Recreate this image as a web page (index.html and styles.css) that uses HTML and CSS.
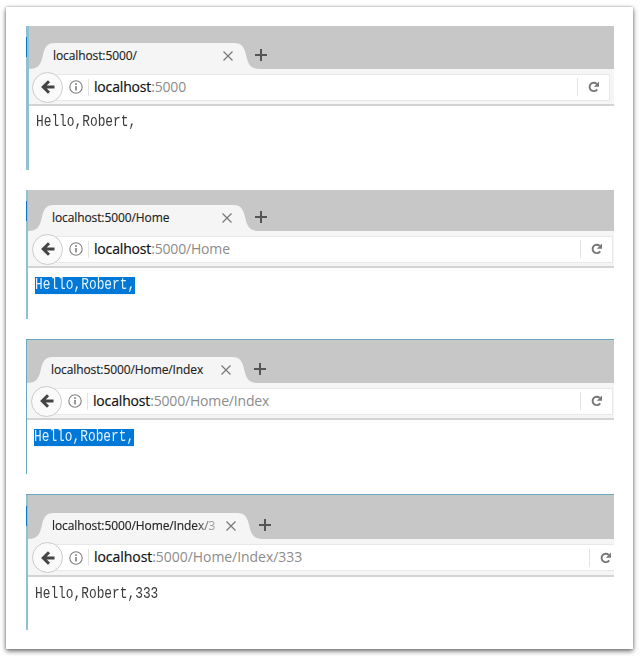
FILE: index.html
```html
<!DOCTYPE html>
<html lang="en">
<head>
<meta charset="utf-8">
<title>localhost:5000</title>
<link rel="stylesheet" href="styles.css">
</head>
<body>
<svg width="0" height="0" class="defs">
  <symbol id="tab-left" viewBox="0 0 26 27"><path d="M0 27V26C9 26 11.5 22 13.5 14C15.500 4 18 0 26 0V27Z" fill="#f5f5f5"/></symbol>
  <symbol id="tab-right" viewBox="0 0 26 27"><path d="M26 27V26C17 26 14.500 22 12.500 14C10.500 4 8 0 0 0V27Z" fill="#f5f5f5"/></symbol>
  <symbol id="close" viewBox="0 0 10 10"><path d="M.5 .5L9.5 9.5M9.5 .5L.5 9.5" stroke="#777" stroke-width="1.2"/></symbol>
  <symbol id="plus" viewBox="0 0 12 12"><path d="M6 0V12M0 6H12" stroke="#555" stroke-width="2"/></symbol>
  <symbol id="back" viewBox="0 0 14 14"><path d="M8 1.2L2.2 7L8 12.8M2.5 7H13.5" fill="none" stroke="#444" stroke-width="3"/></symbol>
  <symbol id="info" viewBox="0 0 14 14"><circle cx="7" cy="7" r="6.2" fill="none" stroke="#808080" stroke-width="1.1"/><path d="M7 3.3V4.900M7 6V10.600" stroke="#777" stroke-width="1.5"/></symbol>
  <symbol id="reload" viewBox="0 0 12 12"><path d="M9.2 8.4A4.2 4.2 0 1 1 8.7 2.9" fill="none" stroke="#777" stroke-width="1.9"/><path d="M11 .4V5.7H5.8Z" fill="#777"/></symbol>
</svg>
<main class="sheet">
  <section class="window first">
    <div class="strip"></div>
    <div class="frame">
      <div class="tabs">
        <svg class="curve"><use href="#tab-left"/></svg>
        <div class="tab"><span class="title">localhost:5000/</span><svg class="close"><use href="#close"/></svg></div>
        <svg class="curve"><use href="#tab-right"/></svg>
        <svg class="plus"><use href="#plus"/></svg>
      </div>
      <div class="toolbar">
        <div class="back"><svg><use href="#back"/></svg></div>
        <div class="field"><svg class="info"><use href="#info"/></svg><div class="url"><b>localhost</b>:5000</div><div class="reload"><svg><use href="#reload"/></svg></div></div>
      </div>
      <div class="page"><span class="output">Hello,Robert,</span></div>
    </div>
  </section>
  <section class="window second">
    <div class="strip"></div>
    <div class="frame">
      <div class="tabs">
        <svg class="curve"><use href="#tab-left"/></svg>
        <div class="tab"><span class="title">localhost:5000/Home</span><svg class="close"><use href="#close"/></svg></div>
        <svg class="curve"><use href="#tab-right"/></svg>
        <svg class="plus"><use href="#plus"/></svg>
      </div>
      <div class="toolbar">
        <div class="back"><svg><use href="#back"/></svg></div>
        <div class="field"><svg class="info"><use href="#info"/></svg><div class="url"><b>localhost</b>:5000/Home</div><div class="reload"><svg><use href="#reload"/></svg></div></div>
      </div>
      <div class="page"><span class="output selected">Hello,Robert,</span></div>
    </div>
  </section>
  <section class="window third">
    <div class="strip"></div>
    <div class="frame">
      <div class="tabs">
        <svg class="curve"><use href="#tab-left"/></svg>
        <div class="tab"><span class="title">localhost:5000/Home/Index</span><svg class="close"><use href="#close"/></svg></div>
        <svg class="curve"><use href="#tab-right"/></svg>
        <svg class="plus"><use href="#plus"/></svg>
      </div>
      <div class="toolbar">
        <div class="back"><svg><use href="#back"/></svg></div>
        <div class="field"><svg class="info"><use href="#info"/></svg><div class="url"><b>localhost</b>:5000/Home/Index</div><div class="reload"><svg><use href="#reload"/></svg></div></div>
      </div>
      <div class="page"><span class="output selected">Hello,Robert,</span></div>
    </div>
  </section>
  <section class="window fourth">
    <div class="strip"></div>
    <div class="frame">
      <div class="tabs">
        <svg class="curve"><use href="#tab-left"/></svg>
        <div class="tab"><span class="title fade">localhost:5000/Home/Index/3</span><svg class="close"><use href="#close"/></svg></div>
        <svg class="curve"><use href="#tab-right"/></svg>
        <svg class="plus"><use href="#plus"/></svg>
      </div>
      <div class="toolbar">
        <div class="back"><svg><use href="#back"/></svg></div>
        <div class="field"><svg class="info"><use href="#info"/></svg><div class="url"><b>localhost</b>:5000/Home/Index/333</div><div class="reload"><svg><use href="#reload"/></svg></div></div>
      </div>
      <div class="page"><span class="output">Hello,Robert,333</span></div>
    </div>
  </section>
</main>
</body>
</html>
```
FILE: styles.css
```css
* { box-sizing: border-box; }
body { margin: 0; height: 656px; padding: 7px 7px 7px 6px; overflow: hidden; background: #fff; font-family: "Open Sans", "Noto Sans", sans-serif; }
svg { display: block; flex: none; }
.defs { position: absolute; }
.sheet { height: 642px; width: 627px; padding: 19px 19px 0 20px; background: #fff; box-shadow: 0 2px 5px #666, 0 0 2px #bbb; }

.window { display: flex; width: 588px; overflow: hidden; }
.frame { flex: 1; min-width: 0; display: flex; flex-direction: column; }
.strip { flex: none; width: 2px; background: linear-gradient(#0877c6, #0877c6) 0 11px / 1px 20px no-repeat #8fc1d2; }

.tabs { display: flex; align-items: flex-end; background: #c7c7c7; }
.curve { width: 26px; height: 27px; margin-bottom: -1px; }
.tab { display: flex; align-items: center; width: 179px; height: 27px; margin-bottom: -1px; background: #f5f5f5; }
.title { flex: 1; margin-left: -2px; padding-bottom: 2px; font-size: 12px; line-height: 23px; letter-spacing: -.1px; color: #222; white-space: nowrap; -webkit-text-stroke: .15px #222; }
.fade { -webkit-mask-image: linear-gradient(90deg, #000 142px, transparent 172px); mask-image: linear-gradient(90deg, #000 142px, transparent 172px); }
.close { width: 10px; height: 10px; margin: 0 1px 2px 0; }
.plus { width: 12px; height: 12px; margin: 0 0 8px -4px; }
.first .plus { margin-left: -5px; }

.toolbar { flex: none; display: flex; align-items: center; height: 37px; padding: 1px 4px 0; background: #f5f5f5; border-bottom: 2px solid #d3d3d3; }
.back { flex: none; display: grid; place-items: center; width: 31px; height: 31px; border: 1px solid #ccc; border-radius: 50%; background: #fafafa; position: relative; z-index: 1; }
.back svg { width: 14px; height: 14px; }
.field { flex: 1; min-width: 0; display: flex; align-items: center; height: 27px; margin-left: -7px; padding-left: 12px; background: #fff; border: 1px solid #e8e8e8; }
.info { width: 14px; height: 14px; }
.url { flex: 1; height: 17px; margin-left: 5px; padding-left: 5px; border-left: 1px solid #e3e3e3; font-size: 14px; line-height: 16px; letter-spacing: -.17px; color: #8c8c8c; white-space: nowrap; }
.url b { font-weight: 400; color: #111; -webkit-text-stroke: .2px #111; }
.reload { display: grid; place-items: center; width: 32px; height: 18px; border-left: 1px solid #e3e3e3; }
.reload svg { width: 12px; height: 12px; }

.page { display: flex; padding: 9px 7px; }
.output { height: 14px; font: 12.85px/14px "Liberation Mono", monospace; color: #3c3c3c; white-space: nowrap; transform: scaleY(1.22); transform-origin: 0 0; }
.selected { background: #0078d7; color: #e4f2ff; }

.first { height: 144px; margin-bottom: 20px; }
.first .strip { width: 3px; }
.first .tabs { height: 43px; }
.first .back { margin-left: -1px; }
.first .page { padding-top: 8px; }
.second { height: 129px; margin-bottom: 20px; }
.second .tabs { height: 41px; }
.second .toolbar, .third .toolbar { padding-right: 1px; }
.third { height: 135px; margin-bottom: 20px; border-top: 1px solid #68a9bd; }
.third .strip { width: 1px; background: #68a9bd; }
.third .tabs { height: 43px; }
.fourth { height: 136px; border-top: 1px solid #68a9bd; }
.fourth .tabs { height: 44px; }
.fourth .tab { width: 183px; }
.fourth .toolbar { height: 38px; padding-right: 0; }
.fourth .field { border-right: 0; }
.fourth .url { letter-spacing: -.05px; }
.fourth .reload { width: 25px; place-items: center end; }
.fourth .reload svg { margin-right: 2px; }
```
